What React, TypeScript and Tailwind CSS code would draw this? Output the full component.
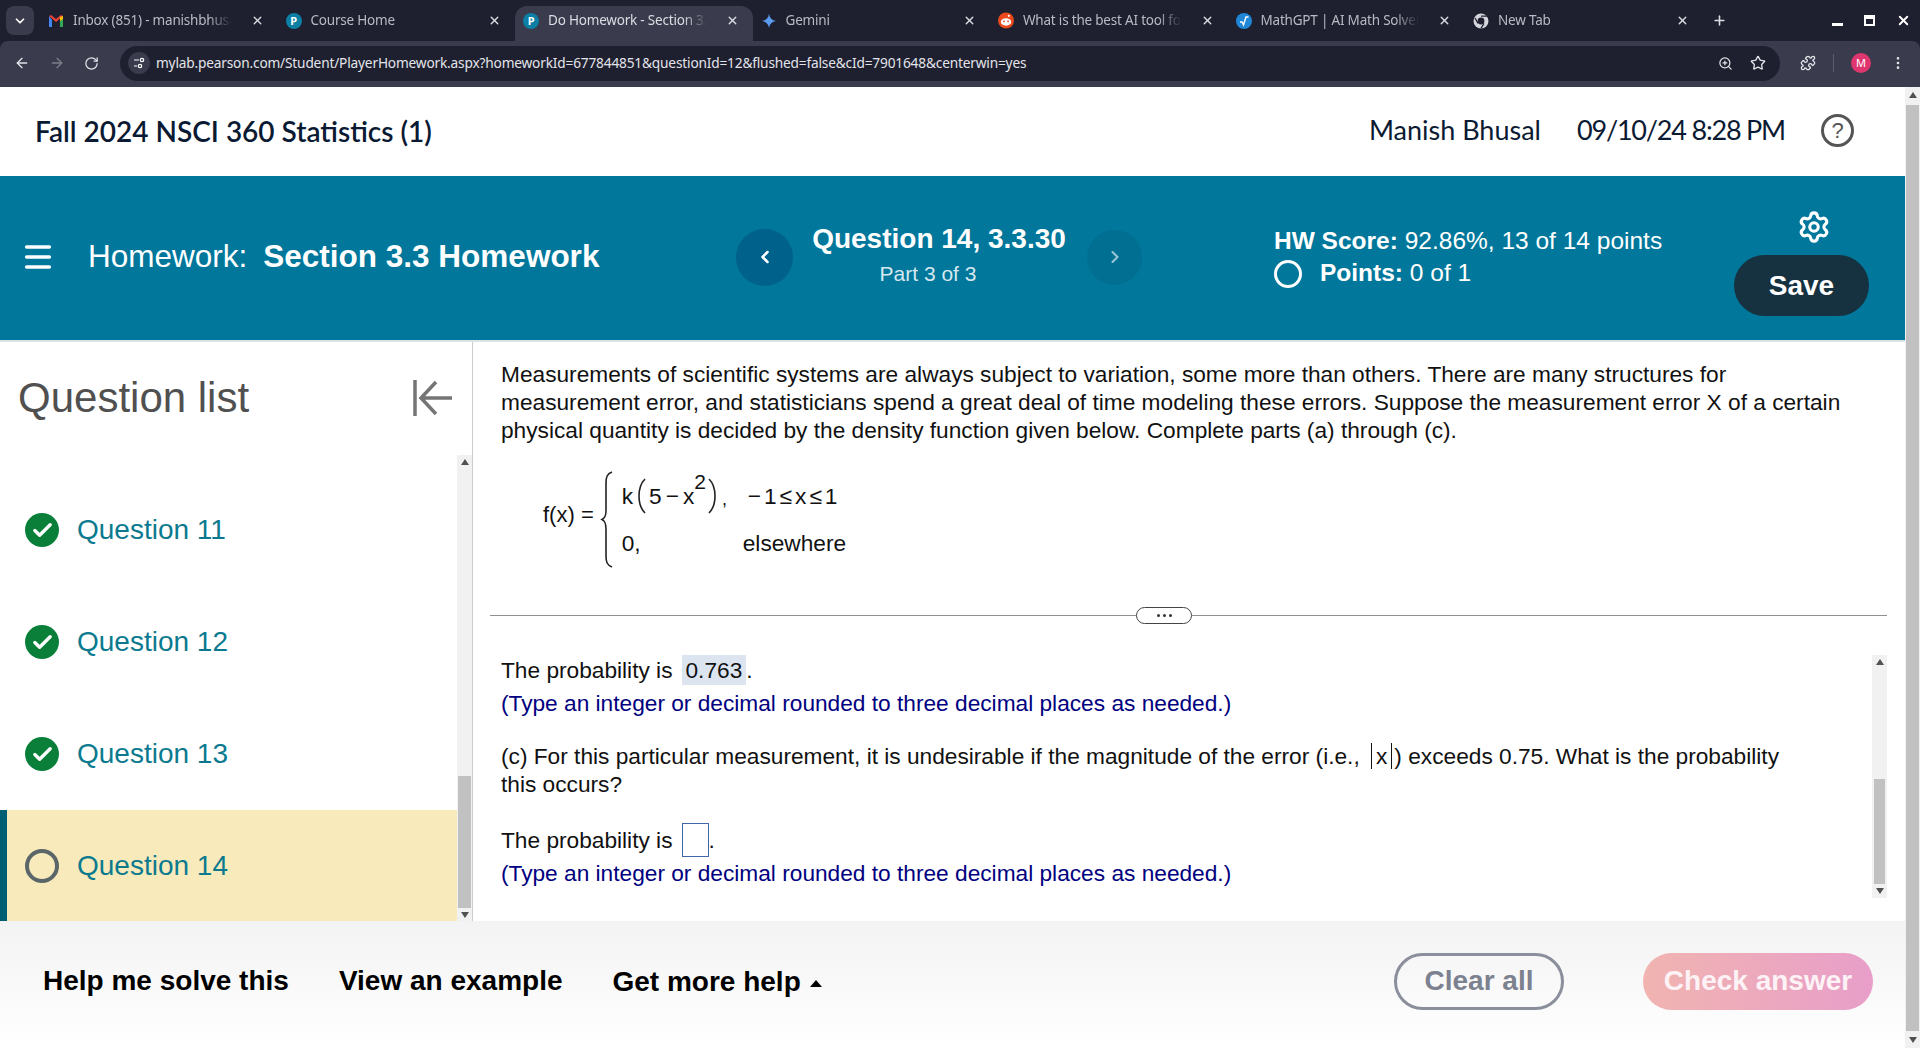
import React from "react";
import {
  ArrowLeft,
  ArrowRight,
  RotateCw,
  ZoomIn,
  Star,
  Puzzle,
  EllipsisVertical,
  ChevronDown,
  ChevronLeft,
  ChevronRight,
  X,
  Plus,
  Settings,
  Menu,
  Check,
} from "lucide-react";

const PearsonIcon = () => (
  <span className="w-[16px] h-[16px] rounded-full bg-[#0d7fa5] text-white text-[11px] leading-[16px] text-center font-bold">P</span>
);
const GmailIcon = () => (
  <svg width="16" height="16" viewBox="0 0 16 16">
    <path d="M1 3v11h3V7z" fill="#4285f4" />
    <path d="M15 3v11h-3V7z" fill="#34a853" />
    <path d="M1 3l7 6 7-6-2-1-5 4-5-4z" fill="#ea4335" />
    <path d="M12 4l3-1v3l-3 2z" fill="#fbbc04" />
  </svg>
);
const GeminiIcon = () => (
  <svg width="16" height="16" viewBox="0 0 16 16">
    <path d="M8 1C8.6 5 11 7.4 15 8 11 8.6 8.6 11 8 15 7.4 11 5 8.6 1 8 5 7.4 7.4 5 8 1z" fill="#5b9cf0" />
  </svg>
);
const RedditIcon = () => (
  <svg width="17" height="17" viewBox="0 0 17 17">
    <circle cx="8.5" cy="8.5" r="8.5" fill="#e8491d" />
    <ellipse cx="8.5" cy="10" rx="5.5" ry="4" fill="#fff" />
    <circle cx="6.3" cy="9.4" r="1" fill="#e8491d" />
    <circle cx="10.7" cy="9.4" r="1" fill="#e8491d" />
    <circle cx="11.5" cy="3.5" r="1.2" fill="#fff" />
  </svg>
);
const MathIcon = () => (
  <svg width="16" height="16" viewBox="0 0 16 16">
    <circle cx="8" cy="8" r="8" fill="#1f86d8" />
    <path d="M4 9l2 0 1.5 3L10 4h2.500" fill="none" stroke="#fff" strokeWidth="1.4" />
  </svg>
);
const ChromeIcon = () => (
  <svg width="16" height="16" viewBox="0 0 16 16">
    <circle cx="8" cy="8" r="7.500" fill="#d5d6dc" />
    <circle cx="8" cy="8" r="3.400" fill="#1f1f30" />
    <path d="M8 3.200h6M5 10.400L2 5M11 10.400L8 15.400" stroke="#1f1f30" strokeWidth="1.2" />
  </svg>
);

const tabs = [
  { title: "Inbox (851) - manishbhusal", icon: <GmailIcon /> },
  { title: "Course Home", icon: <PearsonIcon /> },
  { title: "Do Homework - Section 3.3", icon: <PearsonIcon />, active: true },
  { title: "Gemini", icon: <GeminiIcon /> },
  { title: "What is the best AI tool for", icon: <RedditIcon /> },
  { title: "MathGPT | AI Math Solver", icon: <MathIcon /> },
  { title: "New Tab", icon: <ChromeIcon /> },
];

const BrowserBar = () => (
  <div className="h-[87px] shrink-0 flex flex-col bg-[#1e1f2f] font-['Noto_Sans',sans-serif]">
    <div className="h-[41px] flex items-end">
      <div className="w-[28px] h-[29px] ml-[6px] mb-[6px] mr-[6px] rounded-lg bg-[#3a3b4c] flex items-center justify-center text-white">
        <ChevronDown size={14} strokeWidth={3} />
      </div>
      {tabs.map((t) => (
        <div
          key={t.title}
          className={`w-[237.5px] h-[35px] pb-[6px] pl-[8px] pr-[14px] flex items-center gap-[9px] text-[13.5px] tracking-[-0.2px] rounded-t-xl ${
            t.active ? "bg-[#3a3b4c] text-[#dcdde3]" : "text-[#b9bac4]"
          }`}
        >
          <span className="w-[16px] h-[16px] flex items-center justify-center shrink-0">{t.icon}</span>
          <span className="flex-1 whitespace-nowrap overflow-hidden pr-[10px] [mask-image:linear-gradient(to_right,black_80%,transparent_94%)]">
            {t.title}
          </span>
          <X size={13} strokeWidth={2.5} className="text-[#dcdde3] shrink-0" />
        </div>
      ))}
      <div className="h-[35px] pb-[6px] flex items-center ml-[9px] text-[#dcdde3]">
        <Plus size={15} strokeWidth={2.5} />
      </div>
      <div className="flex-1 h-[35px] pb-[6px] flex items-center justify-end gap-[21px] pr-[9px] text-white">
        <span className="w-[11px] h-[3px] mt-[8px] bg-white"></span>
        <span className="w-[11px] h-[11px] border-2 border-white border-t-[4px]"></span>
        <X size={15} strokeWidth={3} />
      </div>
    </div>
    <div className="h-[46px] pb-[2px] bg-[#3a3b4c] rounded-t-lg flex items-center text-[#e3e4ea]">
      <div className="w-[120px] flex items-center pl-[14px] gap-[19px] shrink-0">
        <ArrowLeft size={16} />
        <ArrowRight size={16} className="text-[#7d7e8a]" />
        <RotateCw size={15} />
      </div>
      <div className="w-[1660px] h-[35px] rounded-full bg-[#1e1f2f] flex items-center pl-[8px] pr-[14px] shrink-0">
        <span className="w-[22px] h-[22px] rounded-full bg-[#3a3b4c] flex items-center justify-center mr-[6px]">
          <svg width="12" height="12" viewBox="0 0 12 12" fill="none" stroke="#fff" strokeWidth="1.2">
            <path d="M1 3h5M1 9h3" />
            <circle cx="9" cy="3" r="1.7" />
            <circle cx="7" cy="9" r="1.7" />
          </svg>
        </span>
        <span className="flex-1 text-[13.7px] tracking-[-0.18px] text-[#e3e4ea]">
          mylab.pearson.com/Student/PlayerHomework.aspx?homeworkId=677844851&questionId=12&flushed=false&cId=7901648&centerwin=yes
        </span>
        <ZoomIn size={15} className="mr-[17px]" />
        <Star size={16} />
      </div>
      <div className="flex-1 flex items-center pl-[20px] text-[#e3e4ea]">
        <Puzzle size={16} />
        <span className="w-px h-[18px] bg-[#5c5d6b] ml-[17px] mr-[17px]"></span>
        <span className="w-[20px] h-[20px] rounded-full bg-[#e0366f] text-white text-[11px] leading-[20px] text-center">M</span>
        <EllipsisVertical size={16} className="ml-[19px]" />
      </div>
    </div>
  </div>
);

const TopHeader = () => (
  <div className="h-[89px] shrink-0 pb-[2px] bg-white flex items-center pl-[35px] pr-[51px] text-[#0b1a33]">
    <span className="flex-1 text-[28px] font-semibold font-['Lato',sans-serif]">Fall 2024 NSCI 360 Statistics (1)</span>
    <span className="text-[27px] font-['Lato',sans-serif]">Manish Bhusal</span>
    <span className="ml-[36px] text-[27px] tracking-[-1.2px] font-['Lato',sans-serif]">09/10/24 8:28 PM</span>
    <span className="ml-[36px] w-[33px] h-[33px] rounded-full border-[3px] border-[#555] text-[#555] text-[22px] leading-[27px] text-center font-['Liberation_Sans',sans-serif]">
      ?
    </span>
  </div>
);

const HomeworkBar = () => (
  <div className="relative h-[164px] shrink-0 pb-[2px] bg-[#00779b] shadow-[0_2px_0_#d9e3e8] flex items-center text-white font-['Liberation_Sans',sans-serif]">
    <Menu size={34} strokeWidth={2.5} className="ml-[21px]" />
    <div className="w-[681px] pl-[33px] text-[31.5px] whitespace-nowrap shrink-0">
      Homework:<span className="ml-[16px] font-bold">Section 3.3 Homework</span>
    </div>
    <span className="w-[57px] h-[57px] rounded-full bg-[#00618a] flex items-center justify-center shrink-0">
      <ChevronLeft size={20} strokeWidth={3} />
    </span>
    <div className="w-[292px] text-center shrink-0 -mt-[5px]">
      <div className="text-[28px] font-bold leading-[36px]">Question 14, 3.3.30</div>
      <div className="text-[21px] leading-[28px] mt-[3px] pr-[22px] text-[#d5e8ef]">Part 3 of 3</div>
    </div>
    <span className="ml-[2px] w-[55px] h-[55px] rounded-full bg-[#006f92] flex items-center justify-center shrink-0 text-[#9cc6d6]">
      <ChevronRight size={20} strokeWidth={2.5} />
    </span>
    <div className="ml-[132px] w-[460px] text-[24.5px] leading-[32px] shrink-0">
      <div>
        <span className="font-bold">HW Score:</span> 92.86%, 13 of 14 points
      </div>
      <div className="flex items-center">
        <span className="w-[28px] h-[28px] rounded-full border-[3px] border-white mr-[18px] mt-[2px]"></span>
        <span className="font-bold">Points:</span>&nbsp;0 of 1
      </div>
    </div>
    <div className="w-[135px] flex flex-col items-center shrink-0 mt-[12px]">
      <Settings size={34} strokeWidth={2.2} className="mb-[11px] ml-[24px]" />
      <span className="w-[135px] h-[61px] rounded-full bg-[#16313f] text-[28px] font-bold leading-[61px] text-center">Save</span>
    </div>
  </div>
);

const questions = [
  { label: "Question 11", done: true },
  { label: "Question 12", done: true },
  { label: "Question 13", done: true },
  { label: "Question 14", done: false },
];

const ScrollArrow = ({ up }: { up?: boolean }) => (
  <svg width="8" height="6" viewBox="0 0 8 6" className="shrink-0">
    <path d={up ? "M4 0l4 6H0z" : "M4 6L0 0h8z"} fill="#505050" />
  </svg>
);

const Sidebar = () => (
  <div className="w-[473px] shrink-0 border-r border-[#cccccc] flex flex-col font-['Liberation_Sans',sans-serif]">
    <div className="h-[115px] shrink-0 flex items-start justify-between pl-[18px] pr-[18px] pt-[30px]">
      <span className="text-[42px] leading-[56px] text-[#505050]">Question list</span>
      <svg width="42" height="42" viewBox="0 0 42 42" fill="none" stroke="#757575" strokeWidth="3.5" className="mt-[7px]">
        <path d="M3 3v36M40 21H10M24 5L9 21l15 16" />
      </svg>
    </div>
    <div className="flex-1 flex">
      <div className="w-[457px] pt-[19px]">
        {questions.map((q) => (
          <div
            key={q.label}
            className={`h-[112px] flex items-center ${
              q.done ? "pl-[25px]" : "pl-[18px] bg-[#f9eabb] border-l-[7px] border-[#005f73]"
            }`}
          >
            {q.done ? (
              <span className="w-[34px] h-[34px] rounded-full bg-[#0a7f3a] flex items-center justify-center">
                <Check size={23} strokeWidth={3.5} className="text-white" />
              </span>
            ) : (
              <span className="w-[34px] h-[34px] rounded-full border-[4px] border-[#5a6668]"></span>
            )}
            <span className="ml-[18px] text-[28px] text-[#0b7a8f]">{q.label}</span>
          </div>
        ))}
      </div>
      <div className="w-[15px] bg-[#f1f1f1] flex flex-col items-center justify-between py-[4px]">
        <ScrollArrow up />
        <div className="flex-1 flex flex-col justify-end w-full">
          <div className="h-[132px] mx-[1px] mb-[4px] bg-[#c1c1c1]"></div>
        </div>
        <ScrollArrow />
      </div>
    </div>
  </div>
);

const Formula = () => (
  <div className="flex items-center ml-[42px] mt-[27px] h-[97px] text-[22.7px] text-[#111]">
    <span className="mr-[6px] -mt-[9px] text-[22px]">f(x) =</span>
    <svg width="14" height="97" viewBox="0 0 14 97" fill="none" stroke="#222" strokeWidth="1.6">
      <path d="M12 1C7 3 6 6 6 12v27c0 6-1 8-4 9.500 3 1.500 4 3.500 4 9.500v27c0 6 1 9 6 11" />
    </svg>
    <div className="ml-[8px] grid grid-cols-[121px_auto] grid-rows-[47px_47px] items-center">
      <span className="flex items-center">
        k
        <svg width="12" height="36" viewBox="0 0 12 36" fill="none" stroke="#222" strokeWidth="1.6" className="mx-[2px]">
          <path d="M10 1C2 9 2 27 10 35" />
        </svg>
        5<span className="mx-[4px]">−</span>x<sup className="text-[21px] -mt-[8px]">2</sup>
        <svg width="12" height="36" viewBox="0 0 12 36" fill="none" stroke="#222" strokeWidth="1.6" className="mx-[1px]">
          <path d="M2 1c8 8 8 26 0 34" />
        </svg>
        <span className="text-[18px] mt-[6px] ml-[2px]">,</span>
      </span>
      <span className="pl-[5px] tracking-[3px]">−1≤x≤1</span>
      <span>0,</span>
      <span>elsewhere</span>
    </div>
  </div>
);

const Hint = ({ className }: { className: string }) => (
  <p className={`text-[#000080] leading-[28px] ${className}`}>
    (Type an integer or decimal rounded to three decimal places as needed.)
  </p>
);

const Content = () => (
  <div className="flex-1 flex flex-col min-w-0 text-[22.7px] leading-[28px] text-[#111] font-['Liberation_Sans',sans-serif]">
    <div className="h-[275px] shrink-0 pl-[28px] pt-[20px]">
      <p className="w-[1355px]">
        Measurements of scientific systems are always subject to variation, some more than others. There are many
        structures for measurement error, and statisticians spend a great deal of time modeling these errors. Suppose
        the measurement error X of a certain physical quantity is decided by the density function given below. Complete
        parts (a) through (c).
      </p>
      <Formula />
    </div>
    <div className="relative h-px bg-[#8f8f8f] ml-[17px] mr-[18px] shrink-0">
      <div className="absolute left-[646px] -top-[8px] w-[56px] h-[17px] rounded-full bg-white border border-[#444] flex items-center justify-center gap-[3px]">
        <span className="w-[3px] h-[3px] rounded-full bg-[#333]"></span>
        <span className="w-[3px] h-[3px] rounded-full bg-[#333]"></span>
        <span className="w-[3px] h-[3px] rounded-full bg-[#333]"></span>
      </div>
    </div>
    <div className="flex-1 flex min-h-0 pl-[28px] pt-[39px] pr-[18px]">
      <div className="flex-1">
        <p className="flex items-center h-[30px]">
          The probability is
          <span className="ml-[9px] px-[4px] h-[30px] flex items-center bg-[#dce4f0]">0.763</span>.
        </p>
        <Hint className="mt-[4px]" />
        <p className="mt-[25px] w-[1300px]">
          (c) For this particular measurement, it is undesirable if the magnitude of the error (i.e.,{" "}
          <span className="inline-block ml-[5px] mr-[2px] border-x border-[#111] px-[4px] leading-[26px]">x</span>) exceeds 0.75.
          What is the probability this occurs?
        </p>
        <p className="flex items-center h-[34px] mt-[25px]">
          The probability is
          <span className="ml-[9px] w-[27px] h-[34px] border border-[#3f66a8]"></span>.
        </p>
        <Hint className="mt-[2px]" />
      </div>
      <div className="w-[15px] h-[243px] bg-[#f1f1f1] flex flex-col items-center justify-between py-[4px] shrink-0">
        <ScrollArrow up />
        <div className="flex-1 flex flex-col justify-end w-full">
          <div className="h-[105px] mx-[2px] mb-[4px] bg-[#c1c1c1]"></div>
        </div>
        <ScrollArrow />
      </div>
    </div>
  </div>
);

const Footer = () => (
  <div className="h-[127px] shrink-0 pb-[6px] bg-gradient-to-b from-[#f3f3f3] to-white flex items-center pl-[43px] pr-[32px] text-black font-bold text-[28px] font-['Liberation_Sans',sans-serif]">
    <span className="-mt-[2px]">Help me solve this</span>
    <span className="-mt-[2px] ml-[50px]">View an example</span>
    <span className="ml-[50px] mt-[1px] flex items-center">
      Get more help
      <span className="ml-[9px] mt-[3px] w-0 h-0 border-x-[6px] border-x-transparent border-b-[7px] border-b-black"></span>
    </span>
    <span className="ml-auto w-[170px] h-[57px] rounded-full border-[3px] border-[#8a8f9b] text-[#7c8190] leading-[49px] text-center">
      Clear all
    </span>
    <span className="ml-[79px] w-[230px] h-[57px] rounded-full bg-gradient-to-r from-[#f1b4b0] to-[#e89ec9] text-[#fdf3f6] leading-[55px] text-center">
      Check answer
    </span>
  </div>
);

export default function App() {
  return (
    <div className="w-[1920px] h-[1048px] overflow-hidden flex flex-col bg-white">
      <BrowserBar />
      <div className="flex-1 flex min-h-0">
        <div className="flex-1 flex flex-col min-w-0">
          <TopHeader />
          <HomeworkBar />
          <div className="flex-1 flex min-h-0">
            <Sidebar />
            <Content />
          </div>
          <Footer />
        </div>
        <div className="w-[15px] shrink-0 bg-[#f1f1f1] flex flex-col items-center py-[5px] justify-between">
          <ScrollArrow up />
          <div className="flex-1 w-[13px] mt-[7px] mb-[6px] bg-[#c1c1c1]"></div>
          <ScrollArrow />
        </div>
      </div>
    </div>
  );
}
